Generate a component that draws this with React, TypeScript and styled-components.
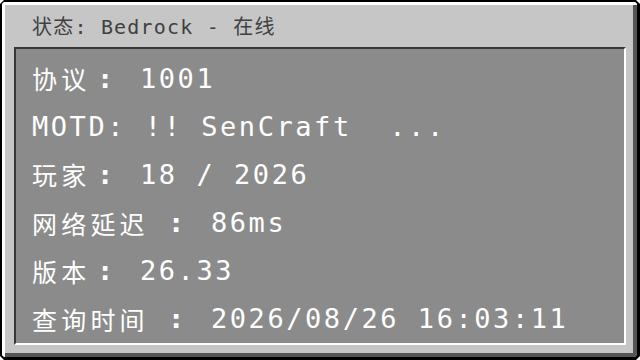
import React from "react";
import styled, { createGlobalStyle } from "styled-components";

const GlobalStyle = createGlobalStyle`
  html, body {
    margin: 0;
    padding: 0;
    background: #ffffff;
    width: 640px;
    height: 360px;
    overflow: hidden;
  }
  #root {
    width: 640px;
    height: 360px;
  }
`;

const MONO = `"DejaVu Sans Mono", "Noto Sans CJK SC", monospace`;
const CJK = `"Noto Sans CJK SC", "DejaVu Sans", sans-serif`;

const cut = (n: number) => `polygon(
  ${n}px 0, calc(100% - ${n}px) 0, 100% ${n}px, 100% calc(100% - ${n}px),
  calc(100% - ${n}px) 100%, ${n}px 100%, 0 calc(100% - ${n}px), 0 ${n}px
)`;

const Window = styled.div`
  width: 640px;
  height: 360px;
  box-sizing: border-box;
  background: #000000;
  padding: 2px 3px 3px 2px;
  clip-path: ${cut(4)};
`;

const Frame = styled.div`
  height: 100%;
  box-sizing: border-box;
  background: #c6c6c6;
  box-shadow: inset 3px 3px 0 #ffffff, inset -4px -4px 0 #555555;
  clip-path: ${cut(2)};
  display: flex;
  flex-direction: column;
  padding: 0 11px 12px 12px;
`;

const Title = styled.div`
  height: 45px;
  flex: none;
  display: flex;
  align-items: center;
  padding: 2px 0 0 18px;
  box-sizing: border-box;
  color: #404040;
  font-family: ${MONO};
  font-size: 20px;
  letter-spacing: 1.2px;
  white-space: pre;
`;

const Panel = styled.div`
  flex: 1;
  min-height: 0;
  background: #8b8b8b;
  border-style: solid;
  border-width: 2px;
  border-color: #373737 #ffffff #ffffff #373737;
  padding: 5px 16px 0 16px;
  display: flex;
  flex-direction: column;
`;

const Row = styled.div`
  height: 48.17px;
  display: flex;
  align-items: center;
  color: #ffffff;
  white-space: pre;
`;

const Label = styled.span<{ $w: number }>`
  flex: none;
  width: ${(p) => p.$w}px;
  display: flex;
  justify-content: space-between;
  align-items: center;
`;

const Name = styled.span`
  font-family: ${CJK};
  font-size: 25px;
  letter-spacing: 4.2px;
`;

const Colon = styled.span`
  width: 14px;
  text-align: center;
  font-family: ${MONO};
  font-size: 27px;
  font-weight: bold;
`;

const Value = styled.span<{ $gap?: number }>`
  margin-left: ${(p) => p.$gap ?? 0}px;
  font-family: ${MONO};
  font-size: 27px;
  letter-spacing: 2.55px;
`;

type Item =
  | { kind: "label"; name: string; value: string; w: number }
  | { kind: "text"; text: string };

const rows: Item[] = [
  { kind: "label", name: "协议", value: "1001", w: 79 },
  { kind: "text", text: "MOTD: !! SenCraft  ..." },
  { kind: "label", name: "玩家", value: "18 / 2026", w: 79 },
  { kind: "label", name: "网络延迟", value: "86ms", w: 150 },
  { kind: "label", name: "版本", value: "26.33", w: 79 },
  { kind: "label", name: "查询时间", value: "2026/08/26 16:03:11", w: 150 },
];

export default function App() {
  return (
    <>
      <GlobalStyle />
      <Window>
        <Frame>
          <Title>状态: Bedrock - 在线</Title>
          <Panel>
            {rows.map((r, i) =>
              r.kind === "label" ? (
                <Row key={i}>
                  <Label $w={r.w}>
                    <Name>{r.name}</Name>
                    <Colon>:</Colon>
                  </Label>
                  <Value $gap={29}>{r.value}</Value>
                </Row>
              ) : (
                <Row key={i}>
                  <Value>{r.text}</Value>
                </Row>
              )
            )}
          </Panel>
        </Frame>
      </Window>
    </>
  );
}
